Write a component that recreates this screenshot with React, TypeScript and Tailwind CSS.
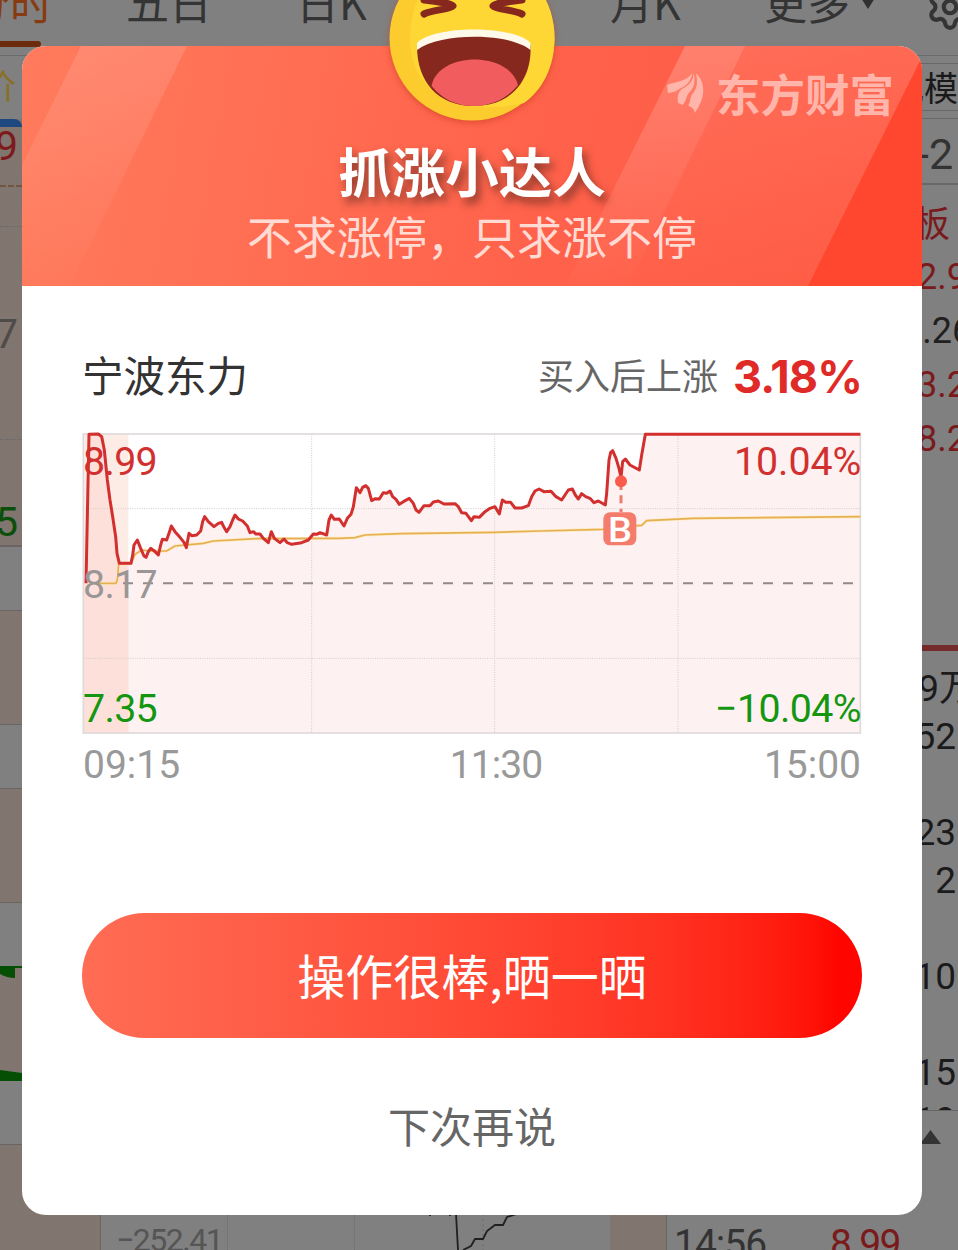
import { Settings } from "lucide-react";

type Segment = { dx: number; points: number[][] };

const priceSegments: Segment[] = [
  {
    dx: -36,
    points: [
      [48, 490], [57, 43], [85, 42], [95, 50], [103, 90], [112, 180], [120, 240], [128, 290], [137, 350], [141, 400], [148, 430], [183, 430],
      [188, 405], [192, 375], [202, 360], [212, 385], [222, 408], [228, 412], [235, 395], [242, 385], [252, 392], [265, 405], [272, 375],
      [277, 358], [290, 360], [297, 340], [304, 318], [315, 335], [330, 352], [342, 367], [349, 383], [357, 340], [365, 347], [380, 345],
      [392, 333], [398, 305], [404, 290], [415, 305], [432, 320], [445, 310], [455, 307], [462, 322], [470, 335], [480, 320], [488, 300],
      [495, 285], [505, 297], [518, 303], [532, 318], [540, 338], [550, 335], [558, 342], [570, 342], [580, 355], [595, 368], [604, 335],
      [613, 355], [630, 368], [642, 357], [652, 368], [665, 373], [695, 368], [715, 360], [730, 342], [740, 343], [750, 338], [770, 345],
      [777, 300], [784, 285], [793, 298], [808, 297],
    ],
  },
  {
    dx: 774,
    points: [
      [0, 300], [12, 318], [22, 295], [33, 283], [40, 260], [49, 203], [60, 218], [68, 202], [77, 197], [85, 205], [95, 242], [105, 236],
      [118, 237], [130, 218], [140, 220], [150, 213], [158, 230], [168, 238], [178, 253], [190, 245], [208, 235], [220, 250], [228, 270],
      [237, 277], [252, 257], [270, 257], [280, 246], [295, 243], [312, 252], [345, 251], [355, 260], [365, 278], [378, 280], [394, 302],
      [402, 290], [418, 292], [435, 275], [450, 265], [465, 260], [478, 282], [487, 240], [497, 247], [512, 247], [525, 264], [545, 264],
      [565, 257], [575, 230], [585, 213], [597, 207], [612, 215], [633, 214], [648, 230], [665, 240], [675, 225], [685, 210], [697, 207],
      [706, 225], [715, 237], [725, 221], [737, 230], [750, 235], [762, 248], [775, 243], [796, 255],
    ],
  },
  {
    dx: 1524,
    points: [
      [50, 220], [57, 120], [62, 97], [68, 92], [78, 115], [87, 145], [93, 172], [98, 125], [106, 117], [120, 135], [148, 150], [155, 105],
      [166, 43], [811, 43],
    ],
  },
];

const averageSegments: Segment[] = [
  {
    dx: -36,
    points: [
      [80, 490], [138, 490], [142, 480], [146, 432], [183, 430], [195, 403], [215, 390], [240, 393], [290, 393], [315, 378], [400, 370],
      [430, 363], [560, 356], [800, 355],
    ],
  },
  { dx: 774, points: [[0, 355], [45, 353], [75, 345], [180, 341], [465, 337], [600, 333], [790, 328]] },
  { dx: 1524, points: [[60, 322], [155, 316], [170, 302], [310, 295], [812, 290]] },
];

// chart units are a third of a pixel, origin in the top left corner of the plot
const toPoints = (segments: Segment[]) =>
  segments.flatMap((s) => s.points.map(([x, y]) => `${x + s.dx},${y - 36}`)).join(" ");

function Chart() {
  const price = toPoints(priceSegments);
  return (
    <svg className="block h-[302px] w-[780px] font-['Roboto',sans-serif]" viewBox="0 0 2340 906">
      <polygon points={`12,904 ${price} 2335,904`} fill="#fdf2f1" />
      <rect x="4" y="6" width="135" height="896" fill="#fadfd4" fillOpacity="0.6" />
      <polygon points="4,904 4,454 12,454 21,7 49,6 59,14 67,54 76,144 101,314 112,394 139,394 139,904" fill="#fde0da" />
      <rect x="4" y="6" width="2331" height="897" fill="none" stroke="#dfdada" strokeWidth="5" />
      <g stroke="#d3cccc" strokeWidth="3" strokeDasharray="3 4">
        <path d="M4 230H2335M4 679H2335M689 6V903M1238 6V903M1788 6V903" />
      </g>
      <path d="M123 454H2330" stroke="#938b8b" strokeWidth="6" strokeDasharray="30 30" />
      <polyline points={toPoints(averageSegments)} fill="none" stroke="#ffe9b8" strokeWidth="9" />
      <polyline points={toPoints(averageSegments)} fill="none" stroke="#e5b055" strokeWidth="5" />
      <polyline points={price} fill="none" stroke="#d2302f" strokeWidth="9" strokeLinejoin="round" />
      <path d="M1617 150V240" stroke="#ee7a6d" strokeWidth="9" strokeDasharray="24 16" />
      <circle cx="1617" cy="148" r="18" fill="#f95a49" />
      <rect x="1564" y="241" width="99" height="99" rx="20" fill="#f47c6c" />
      <text x="1578" y="329" fontSize="104" fontWeight="500" textLength="72" lengthAdjust="spacingAndGlyphs" fill="#fff">B</text>
      <g fontSize="118" lengthAdjust="spacing">
        <text x="3" y="128" textLength="224" fill="#d2302f">8.99</text>
        <text x="3" y="497" textLength="224" fill="#9b9696">8.17</text>
        <text x="3" y="869" textLength="224" fill="#149610">7.35</text>
        <text x="1956" y="128" textLength="382" fill="#d2302f">10.04%</text>
        <text x="1899" y="869" textLength="440" fill="#149610">−10.04%</text>
      </g>
    </svg>
  );
}

function Emoji() {
  return (
    <svg className="h-[180px] w-[180px] drop-shadow-[0_2px_3px_rgba(190,50,20,0.5)]" viewBox="0 0 180 180">
      <circle cx="90" cy="90" r="82.5" fill="#fccb2e" />
      <path d="M28 90C28 40 62 8 96 7.700C140 9 172.500 45 172.500 90C172.500 120 160 142 142 155C110 163 76 159 56 146C38 134 28 116 28 90Z" fill="#ffd735" />
      <path d="M42 52C57 54 68 55 71 58C68 62 52 61 42 66" fill="none" stroke="#87281f" strokeWidth="7" strokeLinecap="round" strokeLinejoin="round" />
      <path d="M140 52C125 54 114 55 111 58C114 62 130 61 140 66" fill="none" stroke="#87281f" strokeWidth="7" strokeLinecap="round" strokeLinejoin="round" />
      <path d="M35 98C34 82 148 80 148.500 98C150 130 131 158 92 158C56 158 35 134 35 98Z" fill="#87281f" />
      <path d="M35 102V95C52 77 132 77 148.500 95V102C128 85 60 84 35 102Z" fill="#fff9ea" />
      <path d="M49.500 138C56 104 126 102 136 137C126 150 110 158 92 158C74 158 60 151 49.500 138Z" fill="#f15c5f" />
    </svg>
  );
}

function Banner() {
  return (
    <div className="grid h-[240px] overflow-hidden rounded-t-[24px] bg-[linear-gradient(100deg,#ff7b5d_0%,#ff6a50_38%,#ff614a_60%,#ff5942_100%)]">
      <svg className="col-start-1 row-start-1 h-[240px] w-[900px]" viewBox="0 0 900 240">
        <defs>
          <linearGradient id="fade" x1="0" y1="0" x2="0" y2="1">
            <stop offset="0" stopColor="#fff" stopOpacity="0.13" />
            <stop offset="1" stopColor="#fff" stopOpacity="0.01" />
          </linearGradient>
        </defs>
        <path d="M59 0H165L48 240H0V119Z" fill="url(#fade)" />
        <path d="M663 0H900V11L786 240H543Z" fill="url(#fade)" opacity="0.7" />
        <path d="M663 0H723L606 240H543Z" fill="url(#fade)" />
        <path d="M900 11V240H786Z" fill="#ff462f" />
      </svg>
      <div className="z-10 col-start-1 row-start-1 flex flex-col items-center">
        <div className="mr-[28px] flex h-[94px] items-center gap-[12px] self-end text-[#ffb5a9]">
          <svg className="h-[40px] w-[37px]" viewBox="20 22 110 120" fill="currentColor">
            <path d="M20 58C42 48 75 50 95 23C92 45 80 60 60 68C48 78 36 81 22 82Z" />
            <path d="M99 23C99 50 82 60 63 71C53 80 49 96 53 112L66 118C77 106 76 97 83 84C99 71 107 50 99 23Z" />
            <path d="M106 23C132 45 140 90 103 141C100 128 94 124 83 120C91 106 88 96 94 87C110 70 113 48 106 23Z" />
          </svg>
          <span className="text-[44.500px] leading-[44px] font-bold">东方财富</span>
        </div>
        <h1 className="text-[53.500px] leading-[60px] font-bold text-white [text-shadow:4px_6px_8px_rgba(90,40,30,0.7)]">抓涨小达人</h1>
        <p className="mt-[6px] text-[45px] leading-[60px] text-[#ffdbd4]">不求涨停，只求涨不停</p>
      </div>
    </div>
  );
}

function Dialog() {
  return (
    <div className="absolute top-[46px] left-[22px] h-[1169px] w-[900px] rounded-[24px] bg-white">
      <Banner />
      <div className="absolute -top-[98px] left-[360px] z-20">
        <Emoji />
      </div>
      <div className="flex flex-col px-[60px]">
        <div className="mt-[58px] flex h-[60px] items-center justify-between">
          <span className="text-[41.500px] leading-[60px] text-[#333]">宁波东力</span>
          <div className="flex items-center gap-[15px]">
            <span className="text-[36px] leading-[60px] text-[#666]">买入后上涨</span>
            <span className="pt-[6px] font-['Inter',sans-serif] text-[45px] leading-[56px] font-bold tracking-[-0.900px] text-[#e02a28]">3.18%</span>
          </div>
        </div>
        <div className="mt-[28px]">
          <Chart />
        </div>
        <div className="flex h-[60px] items-center justify-between px-px pt-[2px] font-['Roboto',sans-serif] text-[39px] text-[#999]">
          <span>09:15</span>
          <span className="ml-[48px] tracking-[-0.900px]">11:30</span>
          <span>15:00</span>
        </div>
        <button className="mt-[119px] h-[125px] rounded-full bg-linear-to-r from-[#ff6c54] to-[#ff0500] to-[97%] pb-[3px] text-[48px] leading-[60px] text-white">
          操作很棒,晒一晒
        </button>
        <button className="mt-[57px] text-[42px] leading-[60px] text-[#666]">下次再说</button>
      </div>
    </div>
  );
}

function TabBar() {
  return (
    <div className="-mt-8 flex h-[88px] border-b border-[#6c6c6c] text-[43px] leading-[66px] whitespace-nowrap text-[#343434]">
      <div className="flex w-[41px] shrink-0 flex-col items-end">
        <div className="mr-[-12px] h-[73px] text-[#873b12]">分时</div>
        <div className="h-[6px] w-full rounded-r-full bg-[#6c2c0c]" />
      </div>
      <div className="ml-[85px] w-[170px] shrink-0">五日</div>
      <div className="w-[314px] shrink-0">日K</div>
      <div className="w-[154px] shrink-0">月K</div>
      <div className="w-[97px] shrink-0">更多</div>
      <svg className="mt-[30px] h-[11px] w-[14px] shrink-0" viewBox="0 0 14 11">
        <path d="M0 0H14L7 11Z" fill="#303030" />
      </svg>
      <Settings className="mt-[14px] ml-[50px] h-[50px] w-[50px] shrink-0 text-[#343434]" strokeWidth={2} />
    </div>
  );
}

function MarketLeft() {
  return (
    <div className="flex w-[667px] flex-col border-r border-[#666]">
      <div className="flex h-[63px] w-[22px] justify-end overflow-hidden pr-[6px] text-[34px] leading-[58px] text-[#887029]">价</div>
      <div className="h-[428px] w-[22px] overflow-hidden border-b-2 border-[#6a6462] bg-[#80756f]">
        <div className="h-[8px] rounded-tr-lg bg-[#1e4980]" />
        <div className="flex h-[60px] items-center justify-end border-b-2 border-dashed border-[#72543f] pr-[4px] pb-[18px] font-['Roboto'] text-[41px] text-[#7d1a1c]">8.99</div>
        <div className="h-[40px] border-b border-dotted border-[#666]" />
        <div className="flex h-[213px] items-center justify-end border-b border-dotted border-[#666] pr-[4px] pt-[3px] font-['Roboto'] text-[41px] text-[#4e4b49]">8.17</div>
        <div className="flex justify-end pt-[52px] pr-[4px] font-['Roboto'] text-[41px] text-[#0b4f0b]">7.35</div>
      </div>
      <div className="mt-[63px] h-[115px] border-y border-[#6a6462] bg-[#80756f]" />
      <div className="mt-[63px] h-[115px] border-y border-[#6a6462] bg-[#80756f]" />
      <div className="mt-[63px] flex h-[115px] flex-col justify-between bg-[#80756f]">
        <svg className="h-[12px] w-[22px]" viewBox="0 0 22 12">
          <path d="M0 0H22V2H15V12Q7 12 0 8Z" fill="#044f04" />
        </svg>
        <svg className="h-[12px] w-[22px]" viewBox="0 0 22 12">
          <path d="M0 1L22 4V12H0Z" fill="#044f04" />
        </svg>
      </div>
      <div className="mt-[63px] flex h-[106px]">
        <div className="w-[101px] border-t border-r border-[#6a6462] bg-[#80756f]" />
        <div className="w-[127px] border-r border-dotted border-[#6b6b6b] pt-[76px] pl-[15px] font-['Roboto'] text-[32px] leading-[40px] tracking-[-1.500px] whitespace-nowrap text-[#555]">−252.41</div>
        <div className="w-[127px] border-r border-dotted border-[#6b6b6b]" />
        <svg className="mt-[70px] h-[36px] w-[255px]" viewBox="0 0 255 36">
          <path d="M128 0V36" stroke="#6b6b6b" strokeDasharray="2 3" />
          <path d="M75 0V2M95 0V2M101 0L103 36M108 36L116 32L120 25H128L132 17L140 11H148L152 3L162 0" fill="none" stroke="#202020" strokeWidth="1.800" />
        </svg>
        <div className="flex-1 bg-[#80756f]" />
      </div>
    </div>
  );
}

function MarketRight() {
  return (
    <div className="flex w-[291px] flex-col overflow-hidden whitespace-nowrap">
      <div className="mt-[7px] h-[48px] shrink-0 border-y border-[#686868] pl-[223px] text-[34px] leading-[46px] text-[#191919]">规模</div>
      <div className="mt-[7px] h-[67px] shrink-0 border-t border-b-2 border-[#686868] pl-[250px] font-['Roboto'] text-[43px] leading-[70px] text-[#333]">-2</div>
      <div className="mt-[9px] pl-[247px] text-[36px] leading-[54px] text-[#791a1c]">板</div>
      <div className="mt-[2px] pl-[250px] font-['Roboto'] text-[36px] leading-[54px] text-[#791a1c]">
        <div>2.92</div>
        <div className="-ml-[15px] text-[#202020]">2.26</div>
        <div>3.29</div>
        <div>8.25</div>
      </div>
      <div className="mt-[179px] h-[6px] shrink-0 bg-[#752a2d]" />
      <div className="mt-[14px] h-[446px] shrink-0 overflow-hidden border-b border-[#666] pr-[2px] text-right font-['Roboto'] text-[37px] leading-[48px] text-[#1b1b1b]">
        <div className="mr-[-20px] h-12 font-['Roboto','Noto_Sans_CJK_SC']">9万</div>
        <div>52</div>
        <div className="mt-12">23</div>
        <div>2</div>
        <div className="mt-12">10</div>
        <div className="mt-12">15</div>
        <div>19</div>
      </div>
      <svg className="mt-[19px] ml-[253px] h-[14px] w-[21px] shrink-0" viewBox="0 0 21 14">
        <path d="M0 14L10.500 0L21 14Z" fill="#333" />
      </svg>
      <div className="mt-[78px] flex shrink-0 pl-[7px] font-['Roboto'] text-[39px] leading-[44px] text-[#333]">
        <span className="w-[156px] tracking-[-1px]">14:56</span>
        <span className="tracking-[-1.500px] text-[#791a1c]">8.99</span>
      </div>
    </div>
  );
}

export default function App() {
  return (
    <div className="relative flex h-[1250px] w-[958px] flex-col overflow-hidden bg-[#808080] font-['Noto_Sans_CJK_SC',sans-serif]">
      <TabBar />
      <div className="flex h-[1194px]">
        <MarketLeft />
        <MarketRight />
      </div>
      <Dialog />
    </div>
  );
}
